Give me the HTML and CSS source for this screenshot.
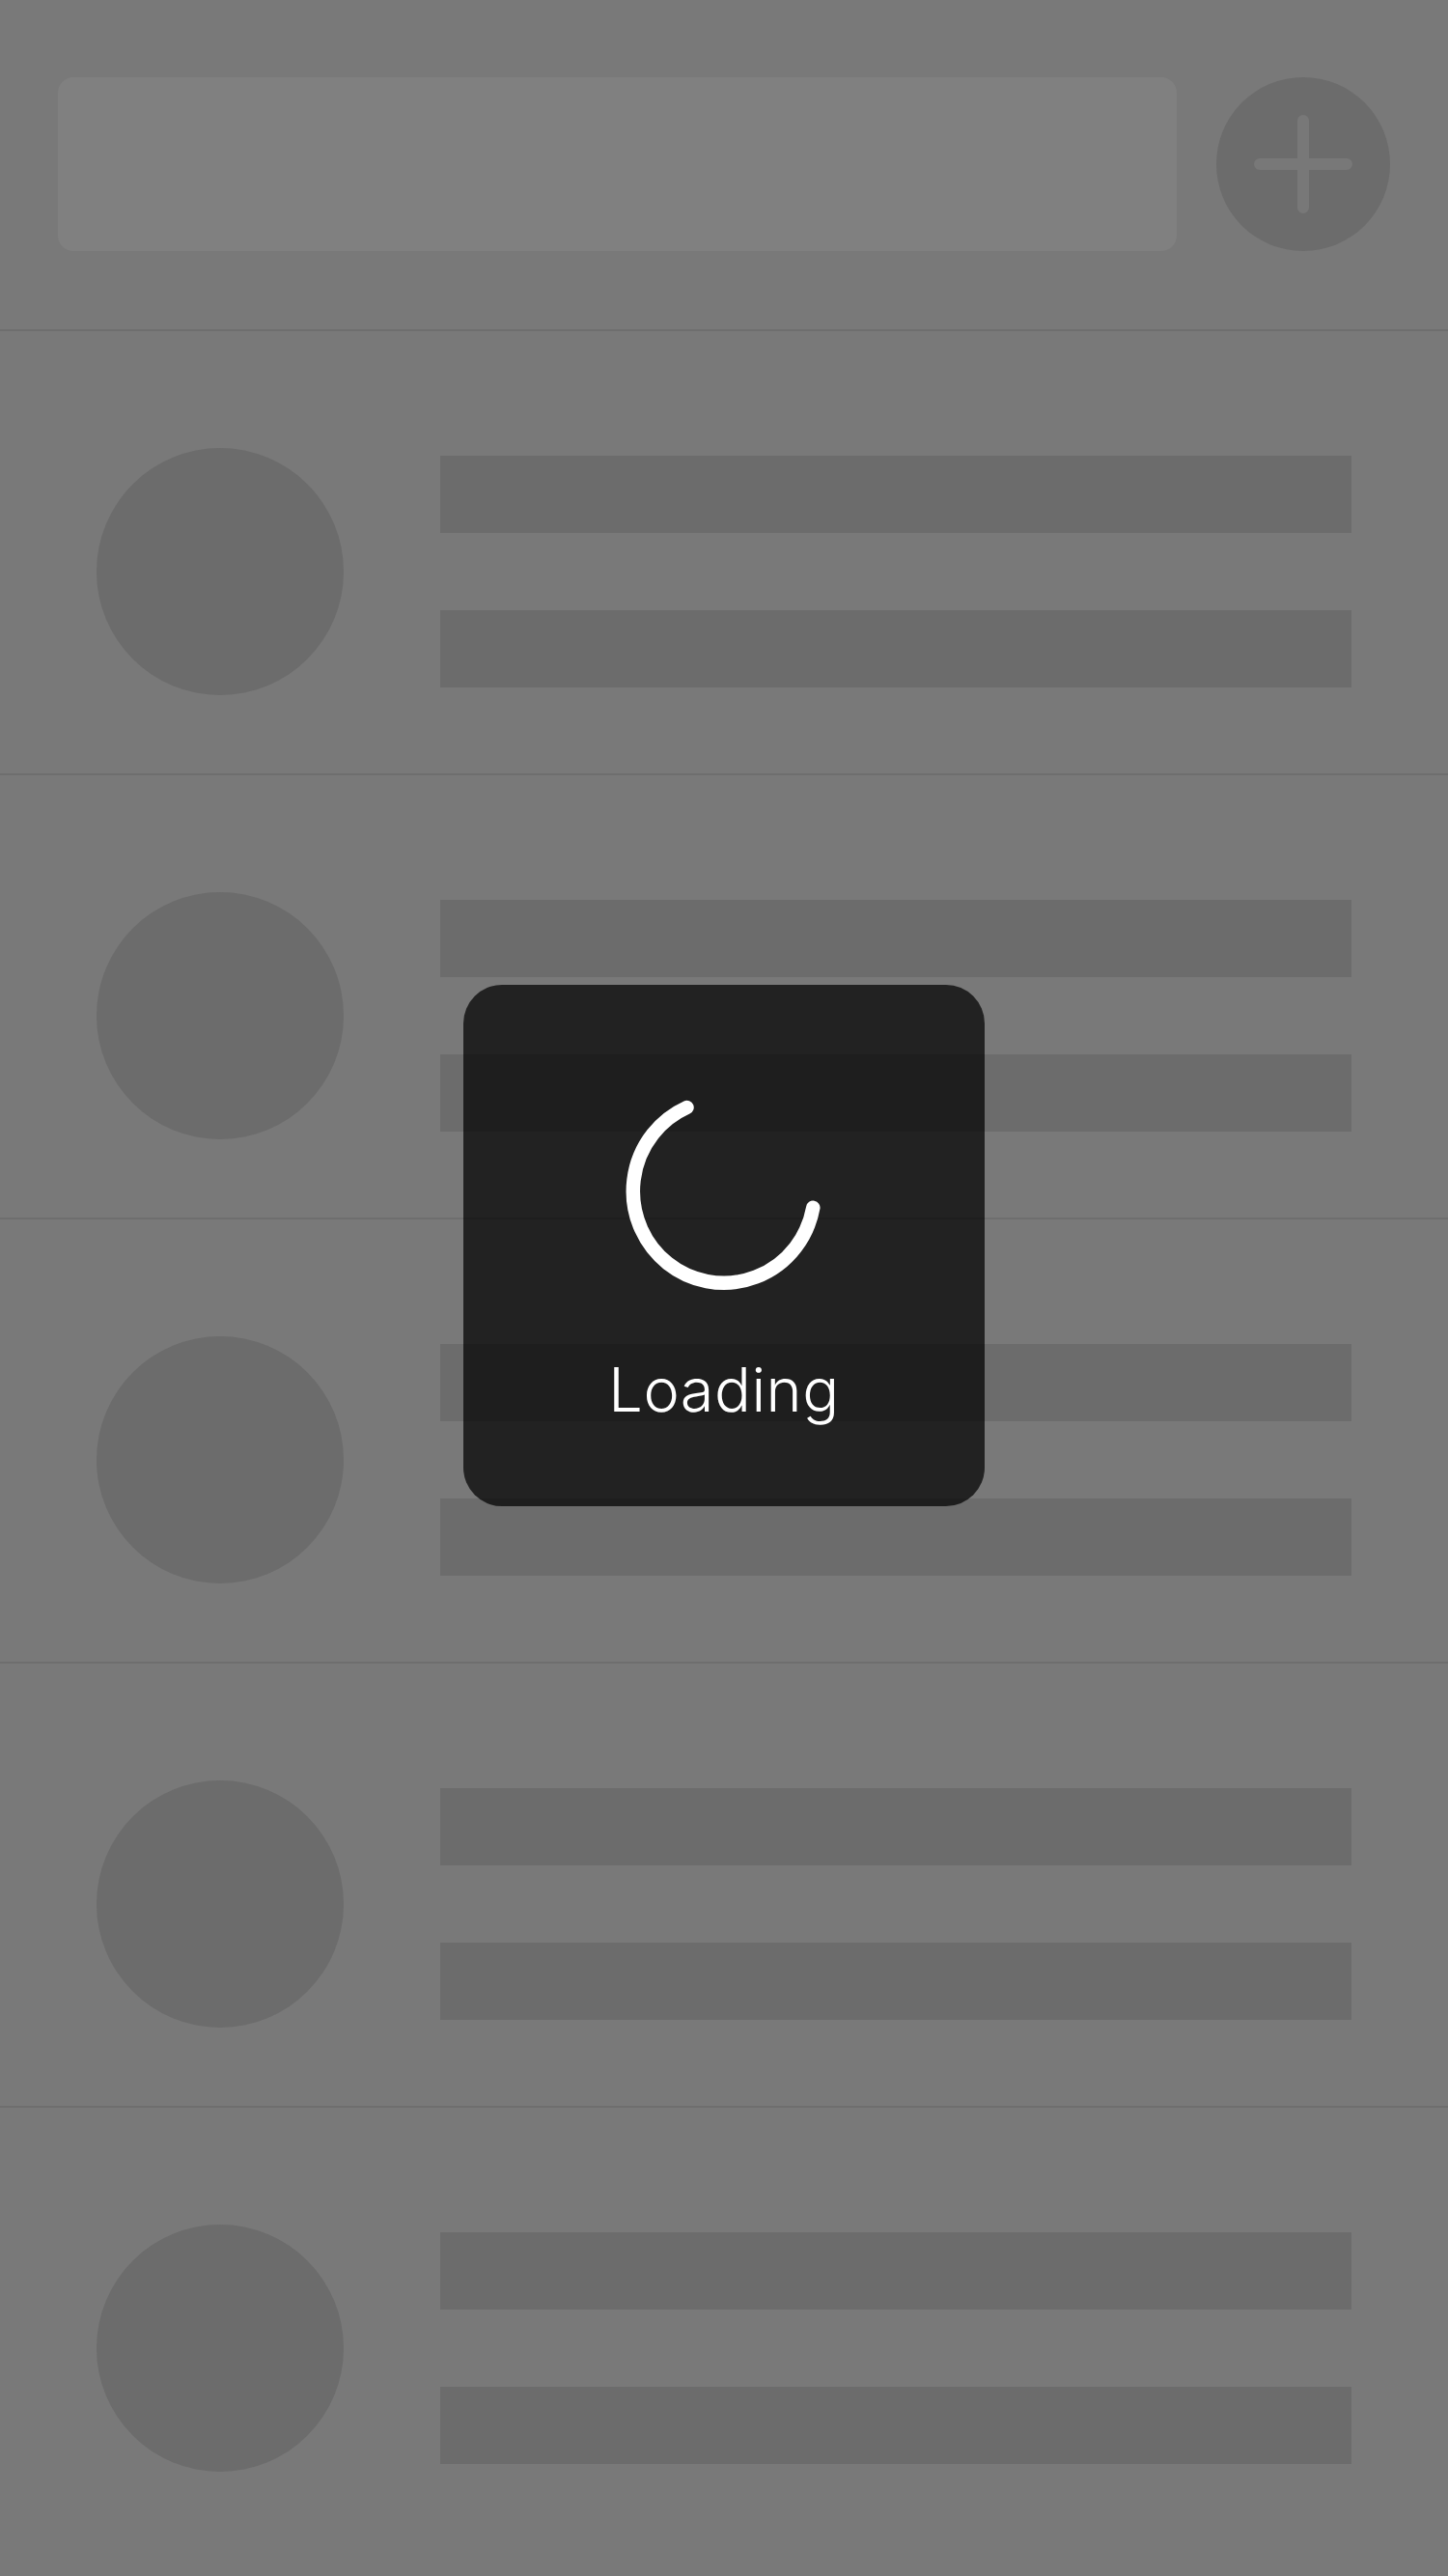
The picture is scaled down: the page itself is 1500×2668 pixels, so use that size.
FILE: index.html
```html
<!DOCTYPE html>
<html lang="en">
<head>
<meta charset="utf-8">
<title>Loading</title>
<link rel="stylesheet" href="styles.css">
</head>
<body>
<div class="page">
  <header class="header">
    <div class="search"></div>
    <button class="add" type="button" aria-label="Add">
      <svg width="104" height="104" viewBox="0 0 104 104" aria-hidden="true">
        <path d="M52 7 V97 M7 52 H97" stroke="#787878" stroke-width="12" stroke-linecap="round" fill="none"/>
      </svg>
    </button>
  </header>
  <ul class="list">
    <li class="row"><div class="avatar"></div><div class="lines"><div class="bar"></div><div class="bar"></div></div></li>
    <li class="row"><div class="avatar"></div><div class="lines"><div class="bar"></div><div class="bar"></div></div></li>
    <li class="row"><div class="avatar"></div><div class="lines"><div class="bar"></div><div class="bar"></div></div></li>
    <li class="row"><div class="avatar"></div><div class="lines"><div class="bar"></div><div class="bar"></div></div></li>
    <li class="row"><div class="avatar"></div><div class="lines"><div class="bar"></div><div class="bar"></div></div></li>
  </ul>
  <div class="hud" role="status">
    <svg class="spinner" width="220" height="220" viewBox="0 0 220 220" aria-hidden="true">
      <path d="M201.3 126.8 A94 95 0 1 1 70.5 23" stroke="#ffffff" stroke-width="14.5" stroke-linecap="round" fill="none"/>
    </svg>
    <div class="hud-label">Loading</div>
  </div>
</div>
</body>
</html>
```

FILE: styles.css
```css
html, body {
  margin: 0;
  padding: 0;
  background: #797979;
}
body {
  font-family: Inter, "Noto Sans", "Liberation Sans", sans-serif;
}
.page {
  position: relative;
  width: 1500px;
  min-height: 2668px;
  background: #797979;
  overflow: hidden;
}
.header {
  display: flex;
  align-items: center;
  gap: 41px;
  padding: 80px 60px 81px 60px;
}
.search {
  flex: 1;
  height: 180px;
  border-radius: 16px;
  background: #808080;
}
.add {
  width: 180px;
  height: 180px;
  flex: none;
  border: 0;
  padding: 0;
  border-radius: 50%;
  background: #6c6c6c;
  display: flex;
  align-items: center;
  justify-content: center;
}
.add svg { display: block; }
.list {
  list-style: none;
  margin: 0;
  padding: 0;
}
.row {
  display: flex;
  align-items: flex-start;
  gap: 100px;
  border-top: 2px solid #6e6e6e;
  padding: 121px 100px 81px 100px;
}
.avatar {
  width: 256px;
  height: 256px;
  flex: none;
  border-radius: 50%;
  background: #6c6c6c;
}
.lines {
  flex: 1;
  display: flex;
  flex-direction: column;
  gap: 80px;
  padding-top: 8px;
}
.bar {
  height: 80px;
  background: #6c6c6c;
}
.hud {
  position: absolute;
  top: 1020px;
  left: 480px;
  width: 540px;
  height: 540px;
  box-sizing: border-box;
  border-radius: 40px;
  background: rgba(0, 0, 0, 0.72);
  display: flex;
  flex-direction: column;
  align-items: center;
  padding-top: 104px;
}
.spinner {
  display: block;
  margin-left: 2px;
}
.hud-label {
  margin-top: 57px;
  color: #ffffff;
  font-size: 63px;
  line-height: 76px;
  font-weight: 300;
  letter-spacing: 0.5px;
}
```
